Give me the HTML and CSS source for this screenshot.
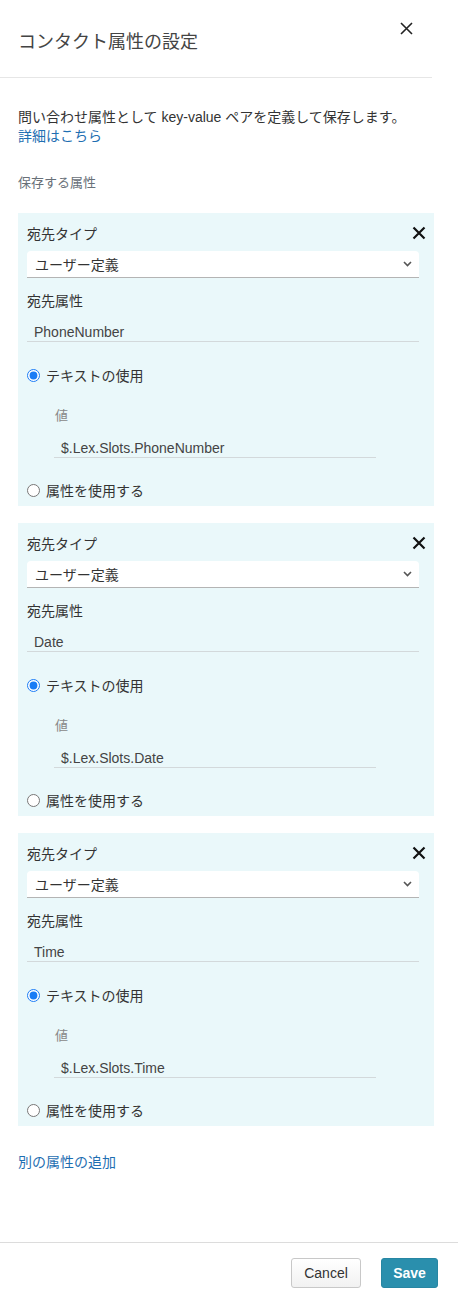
FILE: index.html
```html
<!DOCTYPE html>
<html lang="ja">
<head>
<meta charset="utf-8">
<title>コンタクト属性の設定</title>
<link rel="stylesheet" href="styles.css">
</head>
<body>
<div class="page">
  <header class="header">
    <h1 class="title">コンタクト属性の設定</h1>
    <button class="close-main" aria-label="閉じる">
      <svg width="13" height="13" viewBox="0 0 13 13"><path d="M1 1L12 12M12 1L1 12" stroke="#222" stroke-width="1.6" fill="none"/></svg>
    </button>
  </header>

  <main class="main">
    <p class="intro">問い合わせ属性として key-value ペアを定義して保存します。<br><a class="link" href="#">詳細はこちら</a></p>
    <div class="section-label">保存する属性</div>

    <div class="cards">
      <section class="card">
        <div class="card-head">
          <span class="label">宛先タイプ</span>
          <button class="close-card" aria-label="削除">
            <svg width="14" height="14" viewBox="0 0 14 14"><path d="M1.5 1.5L12.5 12.5M12.5 1.5L1.5 12.5" stroke="#111" stroke-width="2.2" fill="none"/></svg>
          </button>
        </div>
        <div class="select"><span>ユーザー定義</span>
          <svg class="chev" width="9" height="6" viewBox="0 0 9 6"><path d="M1 1L4.5 4.5L8 1" stroke="#555" stroke-width="1.6" fill="none"/></svg>
        </div>
        <div class="label label-attr">宛先属性</div>
        <div class="input">PhoneNumber</div>
        <label class="radio-row first"><input type="radio" name="r1" checked><span>テキストの使用</span></label>
        <div class="value-label">値</div>
        <div class="value-input">$.Lex.Slots.PhoneNumber</div>
        <label class="radio-row second"><input type="radio" name="r1"><span>属性を使用する</span></label>
      </section>

      <section class="card">
        <div class="card-head">
          <span class="label">宛先タイプ</span>
          <button class="close-card" aria-label="削除">
            <svg width="14" height="14" viewBox="0 0 14 14"><path d="M1.5 1.5L12.5 12.5M12.5 1.5L1.5 12.5" stroke="#111" stroke-width="2.2" fill="none"/></svg>
          </button>
        </div>
        <div class="select"><span>ユーザー定義</span>
          <svg class="chev" width="9" height="6" viewBox="0 0 9 6"><path d="M1 1L4.5 4.5L8 1" stroke="#555" stroke-width="1.6" fill="none"/></svg>
        </div>
        <div class="label label-attr">宛先属性</div>
        <div class="input">Date</div>
        <label class="radio-row first"><input type="radio" name="r2" checked><span>テキストの使用</span></label>
        <div class="value-label">値</div>
        <div class="value-input">$.Lex.Slots.Date</div>
        <label class="radio-row second"><input type="radio" name="r2"><span>属性を使用する</span></label>
      </section>

      <section class="card">
        <div class="card-head">
          <span class="label">宛先タイプ</span>
          <button class="close-card" aria-label="削除">
            <svg width="14" height="14" viewBox="0 0 14 14"><path d="M1.5 1.5L12.5 12.5M12.5 1.5L1.5 12.5" stroke="#111" stroke-width="2.2" fill="none"/></svg>
          </button>
        </div>
        <div class="select"><span>ユーザー定義</span>
          <svg class="chev" width="9" height="6" viewBox="0 0 9 6"><path d="M1 1L4.5 4.5L8 1" stroke="#555" stroke-width="1.6" fill="none"/></svg>
        </div>
        <div class="label label-attr">宛先属性</div>
        <div class="input">Time</div>
        <label class="radio-row first"><input type="radio" name="r3" checked><span>テキストの使用</span></label>
        <div class="value-label">値</div>
        <div class="value-input">$.Lex.Slots.Time</div>
        <label class="radio-row second"><input type="radio" name="r3"><span>属性を使用する</span></label>
      </section>
    </div>

    <a class="link add-link" href="#">別の属性の追加</a>
  </main>

  <footer class="footer">
    <button class="btn btn-cancel">Cancel</button>
    <button class="btn btn-save">Save</button>
  </footer>
</div>
</body>
</html>
```

FILE: styles.css
```css
* { box-sizing: border-box; }

html, body {
  margin: 0;
  padding: 0;
  background: #fff;
}

body {
  font-family: "Liberation Sans", "Noto Sans CJK JP", sans-serif;
  color: #333;
  font-size: 14px;
}

.page {
  display: flex;
  flex-direction: column;
  min-height: 1304px;
  width: 458px;
}

.header {
  display: flex;
  justify-content: space-between;
  align-items: flex-start;
  width: 432px;
  height: 78px;
  padding-left: 18px;
  border-bottom: 1px solid #e6e6e6;
}

.title {
  margin: 31px 0 0;
  font-size: 18px;
  line-height: 22px;
  font-weight: 400;
  color: #444;
}

.close-main {
  margin: 22px 19px 0 0;
  padding: 0;
  width: 13px;
  height: 13px;
  border: 0;
  background: none;
  display: flex;
}

.main {
  flex: 1;
  padding: 0 18px;
  display: flex;
  flex-direction: column;
  align-items: flex-start;
}

.intro {
  margin: 30px 0 0;
  font-size: 14px;
  line-height: 19px;
  color: #333;
}

.link {
  color: #1f6fb2;
  text-decoration: none;
}

.section-label {
  margin-top: 28px;
  font-size: 13px;
  line-height: 18px;
  color: #687078;
}

.cards {
  margin-top: 21px;
  display: flex;
  flex-direction: column;
  gap: 17px;
  width: 416px;
}

.card {
  background: #eaf8fa;
  padding: 11px 8px 6px 9px;
  display: flex;
  flex-direction: column;
}

.card-head {
  display: flex;
  justify-content: space-between;
  align-items: center;
  height: 20px;
}

.label {
  font-size: 14px;
  line-height: 20px;
  color: #333;
}

.close-card {
  padding: 0;
  border: 0;
  background: none;
  width: 14px;
  height: 14px;
  display: flex;
  margin-top: -3px;
}

.select {
  margin-top: 7px;
  margin-right: 7px;
  height: 27px;
  background: #fff;
  border-radius: 4px 4px 0 0;
  border-bottom: 1px solid #b4b4b4;
  display: flex;
  align-items: center;
  justify-content: space-between;
  padding: 0 7px 0 8px;
  font-size: 14px;
  color: #333;
}

.chev { display: block; }

.label-attr { margin-top: 13px; }

.input {
  margin-top: 10px;
  margin-right: 7px;
  height: 21px;
  padding: 2px 0 0 7px;
  line-height: 18px;
  border-bottom: 1px solid #d3d9db;
  font-size: 14px;
  color: #444;
}

.radio-row {
  display: flex;
  align-items: center;
  gap: 6px;
  height: 20px;
  font-size: 14px;
  color: #333;
}

.radio-row input {
  margin: 0;
  width: 13px;
  height: 13px;
  accent-color: #1a7cf5;
}

.radio-row.first { margin-top: 23px; }
.radio-row.second { margin-top: 22px; }

.value-label {
  margin-top: 22px;
  margin-left: 28px;
  font-size: 13px;
  line-height: 18px;
  color: #888;
}

.value-input {
  margin-top: 12px;
  margin-left: 27px;
  width: 322px;
  height: 21px;
  padding: 2px 0 0 7px;
  line-height: 18px;
  border-bottom: 1px solid #d3d9db;
  font-size: 14px;
  color: #444;
}

.add-link {
  margin-top: 26px;
  font-size: 14px;
  line-height: 20px;
}

.footer {
  border-top: 1px solid #dcdcdc;
  display: flex;
  justify-content: flex-end;
  gap: 20px;
  padding: 15px 20px 16px;
}

.btn {
  height: 30px;
  border-radius: 3px;
  font-family: "Liberation Sans", sans-serif;
  font-size: 14px;
  padding: 0;
}

.btn-cancel {
  width: 70px;
  background: linear-gradient(#ffffff, #f1f1f1);
  border: 1px solid #c8c8c8;
  color: #333;
}

.btn-save {
  width: 57px;
  background: #2a8fad;
  border: 1px solid #2786a3;
  color: #fff;
  font-weight: 700;
}
```
